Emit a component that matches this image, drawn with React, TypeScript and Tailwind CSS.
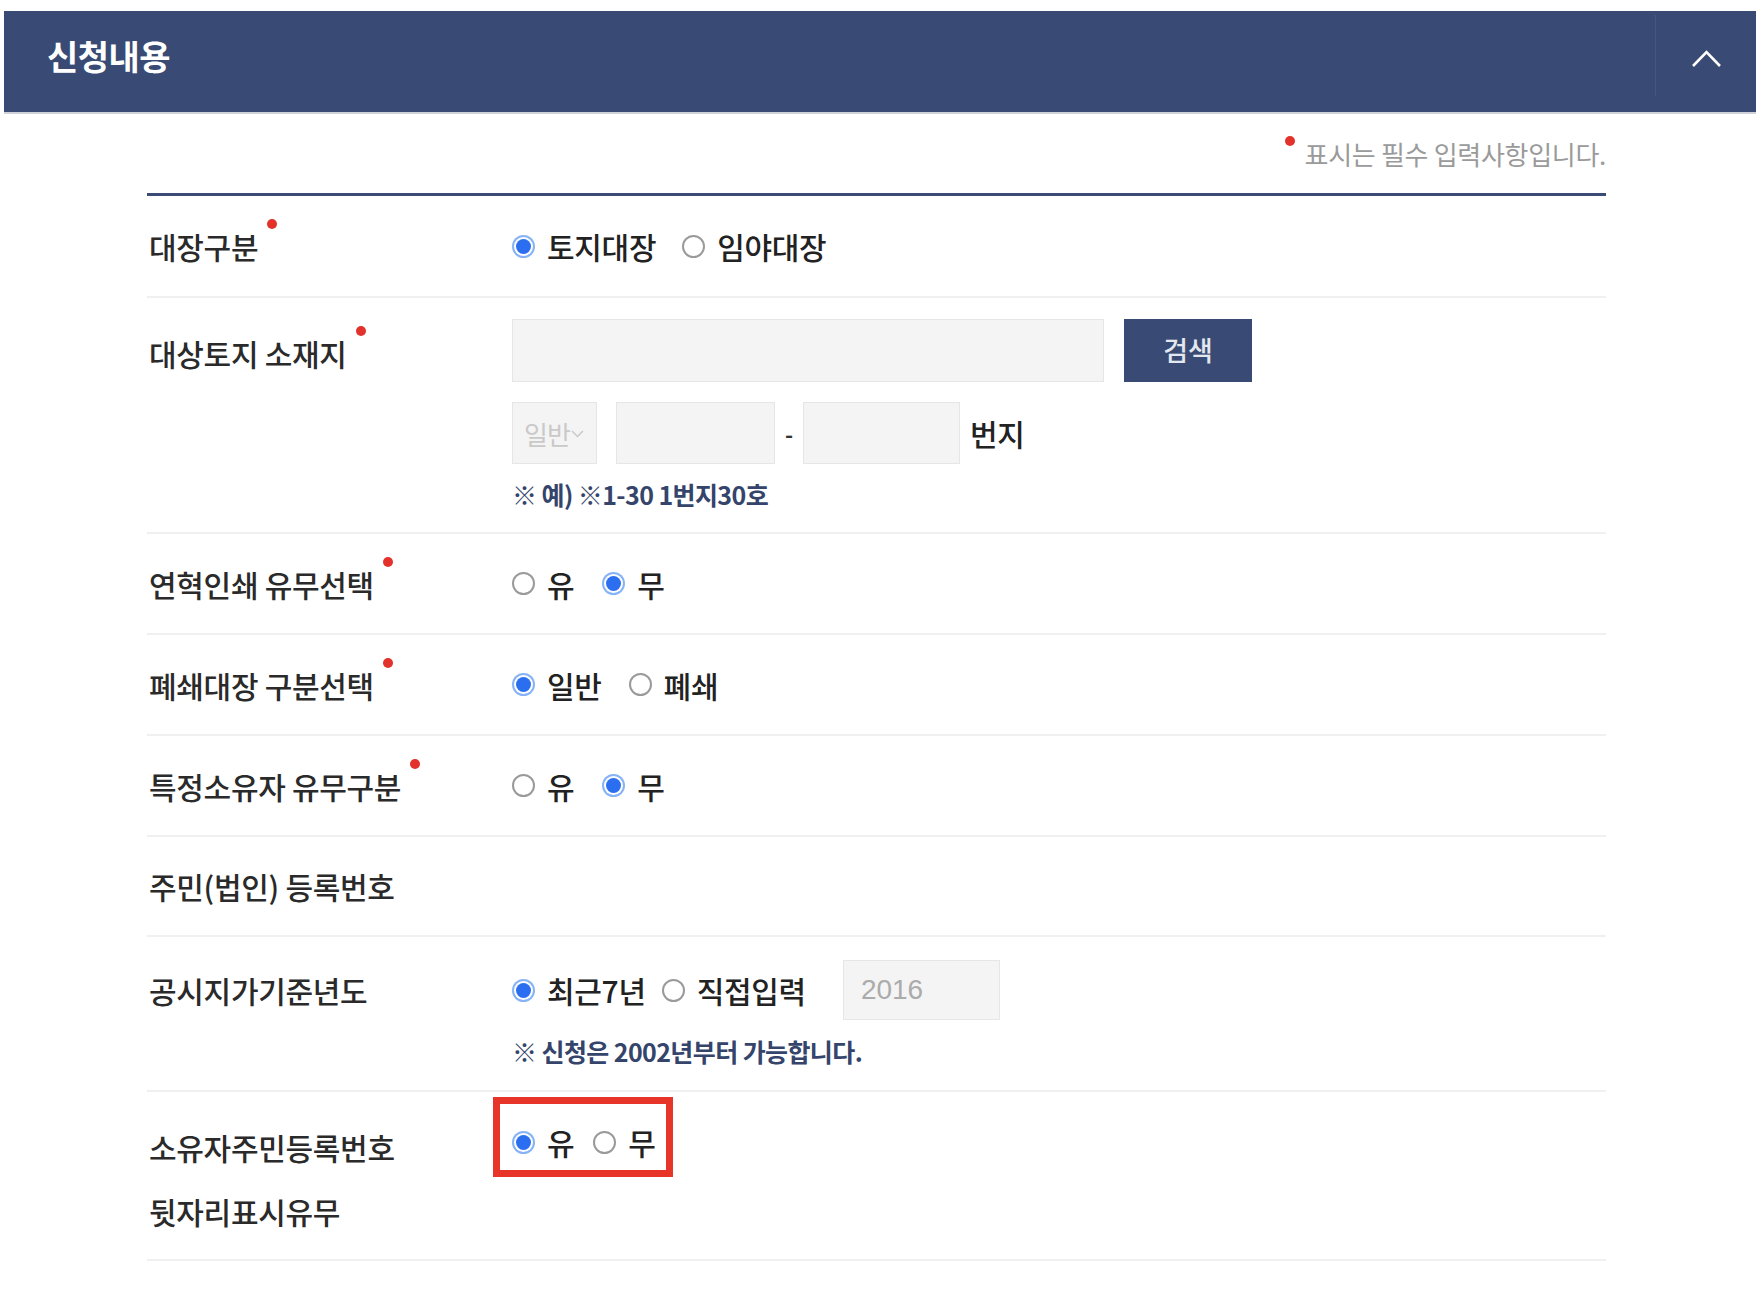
import React from "react";

const KR = "font-['Noto_Sans_CJK_KR','Noto_Sans',sans-serif]";

function Dot({ className }: { className: string }) {
  return <span className={"absolute w-[10px] h-[10px] rounded-full bg-[#e3322b] " + className} />;
}

function Label({ children, req }: { children: React.ReactNode; req?: boolean }) {
  return (
    <span className="relative inline-block text-[30px] leading-[40px] font-medium text-[#2a2a2a] tracking-[-0.3px]">
      {children}
      {req && <Dot className="-right-[19px] -top-[7px]" />}
    </span>
  );
}

function Radio({ checked }: { checked?: boolean }) {
  if (checked) {
    return (
      <span className="w-[23px] h-[23px] shrink-0 rounded-full bg-[#86b2f6] flex items-center justify-center">
        <span className="w-[19px] h-[19px] rounded-full bg-white flex items-center justify-center">
          <span className="w-[15px] h-[15px] rounded-full bg-[#2b6ef0]" />
        </span>
      </span>
    );
  }
  return <span className="w-[23px] h-[23px] shrink-0 rounded-full border-2 border-[#9a9a9a] bg-white" />;
}

function Opt({ checked, text }: { checked?: boolean; text: string }) {
  return (
    <span className="flex items-center gap-[12px]">
      <Radio checked={checked} />
      <span className="text-[30px] leading-[40px] font-medium text-[#222] tracking-[-0.3px]">{text}</span>
    </span>
  );
}

function SimpleRow({
  label,
  req,
  children,
  h,
}: {
  label: React.ReactNode;
  req?: boolean;
  children?: React.ReactNode;
  h: string;
}) {
  return (
    <div className={"flex items-center border-b-2 border-[#f0f0f0] " + h}>
      <div className="w-[365px] pl-[2px]">
        <Label req={req}>{label}</Label>
      </div>
      <div className="flex items-center">{children}</div>
    </div>
  );
}

export default function App() {
  return (
    <div className={"w-[1756px] min-h-[1294px] bg-white " + KR}>
      <div className="pt-[11px] pl-[4px]">
        <header className="h-[103px] bg-[#394b74] border-b-2 border-[#cfd2d8] flex">
          <div className="flex-1 flex items-center pl-[43px] pb-[12px]">
            <h1 className="text-[34px] font-bold text-white tracking-[-0.5px]">신청내용</h1>
          </div>
          <div className="w-[101px] flex items-center justify-center border-l border-[#46577f] my-[4px] mb-[16px]">
            <svg width="31" height="19" viewBox="0 0 31 19" className="mt-[6px]">
              <polyline points="2,17 15.5,3 29,17" fill="none" stroke="#ffffff" strokeWidth="2.6" />
            </svg>
          </div>
        </header>
      </div>

      <div className="ml-[147px] w-[1459px]">
        <div className="h-[79px] flex items-center justify-end">
          <span className="relative text-[26px] leading-[34px] text-[#9a9a9a] tracking-[-0.3px]">
            <Dot className="-left-[20px] -top-[1px] w-[9px] h-[9px]" />
            표시는 필수 입력사항입니다.
          </span>
        </div>
        <div className="border-t-[3px] border-[#3a4c75]" />

        <SimpleRow label="대장구분" req h="h-[102px]">
          <div className="flex items-center gap-[26px]">
            <Opt checked text="토지대장" />
            <Opt text="임야대장" />
          </div>
        </SimpleRow>

        <div className="flex h-[236px] border-b-2 border-[#f0f0f0] pt-[21px]">
          <div className="w-[365px] pl-[2px] h-[63px] flex items-center pt-[4px]">
            <Label req>대상토지 소재지</Label>
          </div>
          <div className="flex flex-col">
            <div className="flex gap-[20px]">
              <div className="w-[592px] h-[63px] bg-[#f4f4f4] border border-[#e6e6e6]" />
              <button className="w-[128px] h-[63px] bg-[#394b74] text-[#e3e7ee] text-[27px] font-medium">검색</button>
            </div>
            <div className="flex items-center mt-[20px]">
              <div className="w-[85px] h-[62px] bg-[#f4f4f4] border border-[#e6e6e6] flex items-center pl-[11px]">
                <span className="text-[26px] text-[#c9c9c9] tracking-[-1px]">일반</span>
                <svg width="13" height="8" viewBox="0 0 13 8" className="ml-[1px] mt-[2px]">
                  <polyline points="1,1 6.5,6.5 12,1" fill="none" stroke="#c9c9c9" strokeWidth="1.5" />
                </svg>
              </div>
              <div className="w-[159px] h-[62px] ml-[19px] bg-[#f4f4f4] border border-[#e6e6e6]" />
              <span className="w-[28px] text-center text-[22px] font-bold text-[#333]">-</span>
              <div className="w-[157px] h-[62px] bg-[#f4f4f4] border border-[#e6e6e6]" />
              <span className="ml-[10px] text-[30px] font-medium text-[#222] tracking-[-0.3px]">번지</span>
            </div>
            <div className="mt-[15px] text-[25px] leading-[30px] font-bold text-[#34446b] tracking-[-0.6px]">
              ※ 예) ※1-30 1번지30호
            </div>
          </div>
        </div>

        <SimpleRow label="연혁인쇄 유무선택" req h="h-[101px]">
          <div className="flex items-center gap-[28px]">
            <Opt text="유" />
            <Opt checked text="무" />
          </div>
        </SimpleRow>

        <SimpleRow label="폐쇄대장 구분선택" req h="h-[101px]">
          <div className="flex items-center gap-[27px]">
            <Opt checked text="일반" />
            <Opt text="폐쇄" />
          </div>
        </SimpleRow>

        <SimpleRow label="특정소유자 유무구분" req h="h-[101px]">
          <div className="flex items-center gap-[28px]">
            <Opt text="유" />
            <Opt checked text="무" />
          </div>
        </SimpleRow>

        <SimpleRow label="주민(법인) 등록번호" h="h-[100px]" />

        <div className="flex h-[155px] border-b-2 border-[#f0f0f0] pt-[23px]">
          <div className="w-[365px] pl-[2px] h-[60px] flex items-center">
            <Label>공시지가기준년도</Label>
          </div>
          <div className="flex flex-col">
            <div className="flex items-center">
              <Opt checked text="최근7년" />
              <span className="ml-[16px]">
                <Opt text="직접입력" />
              </span>
              <div className="ml-[37px] w-[157px] h-[60px] bg-[#f4f4f4] border border-[#e6e6e6] flex items-center pl-[17px]">
                <span className="font-['Liberation_Sans',Arial,sans-serif] text-[28px] text-[#ababab]">2016</span>
              </div>
            </div>
            <div className="mt-[16px] text-[25px] leading-[30px] font-bold text-[#34446b] tracking-[-0.6px]">
              ※ 신청은 2002년부터 가능합니다.
            </div>
          </div>
        </div>

        <div className="flex h-[169px] border-b-2 border-[#f0f0f0]">
          <div className="w-[365px] pl-[2px] pt-[23px]">
            <div className="text-[30px] leading-[64px] font-medium text-[#2a2a2a] tracking-[-0.3px]">
              소유자주민등록번호
              <br />
              뒷자리표시유무
            </div>
          </div>
          <div className="relative h-[100px] flex items-center">
            <div className="flex items-center gap-[19px]">
              <Opt checked text="유" />
              <Opt text="무" />
            </div>
            <div className="absolute -left-[19px] top-[5px] w-[180px] h-[80px] border-[7px] border-[#e8352a]" />
          </div>
        </div>
      </div>
    </div>
  );
}
